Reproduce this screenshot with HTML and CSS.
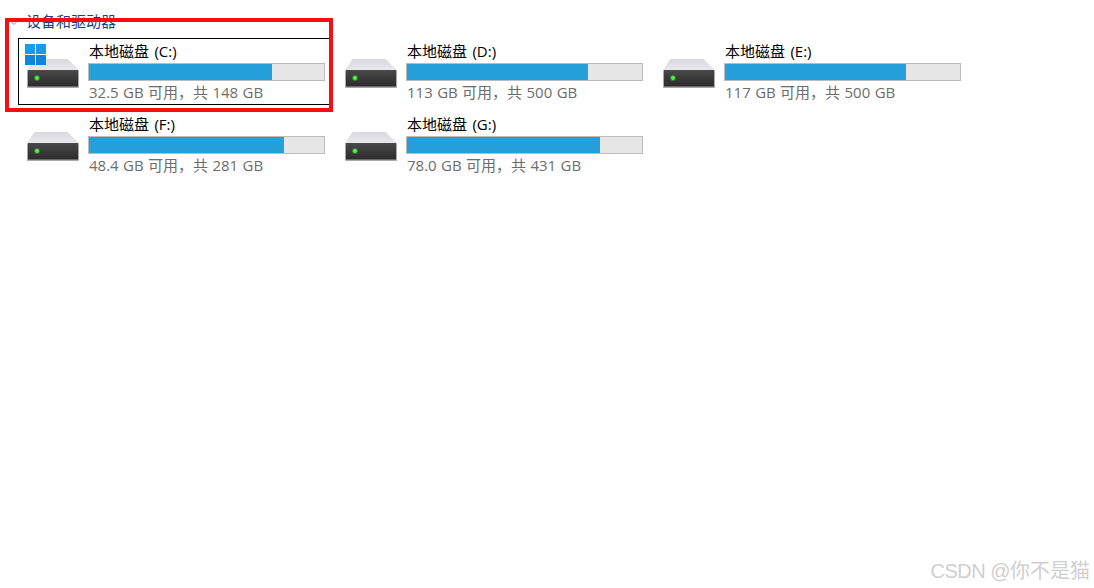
FILE: index.html
```html
<!DOCTYPE html>
<html lang="zh-CN">
<head>
    <meta charset="UTF-8">
    <title>设备和驱动器</title>
    <link rel="stylesheet" href="styles.css">
</head>
<body>
    <svg class="defs" width="0" height="0">
        <defs>
            <linearGradient id="driveFront" x1="0" y1="0" x2="0" y2="1">
                <stop offset="0" stop-color="#4a4a4a"/>
                <stop offset="0.5" stop-color="#3a3a3a"/>
                <stop offset="1" stop-color="#2c2c2c"/>
            </linearGradient>
            <linearGradient id="driveTop" x1="0" y1="0" x2="0" y2="1">
                <stop offset="0" stop-color="#d9d9de"/>
                <stop offset="1" stop-color="#e9e9ec"/>
            </linearGradient>
            <symbol id="drive" viewBox="0 0 56 46">
                <path d="M9.5 16h33L54 27H2z" fill="url(#driveTop)"/>
                <rect x="2" y="27" width="52" height="18" rx="1" fill="#a8a8a8"/>
                <rect x="3" y="27" width="50" height="16.5" fill="url(#driveFront)"/>
                <circle cx="12" cy="35" r="3" fill="#39e639" opacity="0.35"/>
                <circle cx="12" cy="35" r="1.9" fill="#4dff3a"/>
            </symbol>
        </defs>
    </svg>

    <h2 class="group-title">
        <svg class="chevron" width="8" height="6" viewBox="0 0 8 6"><path d="M1 1.5l3 3 3-3" fill="none" stroke="#8a8a8a" stroke-width="1"/></svg>
        设备和驱动器
    </h2>

    <div class="drives">
        <div class="drive selected">
            <div class="drive-icon">
                <svg class="drive-pic" width="56" height="46"><use href="#drive"/></svg>
                <svg class="win-logo" width="21" height="21" viewBox="0 0 21 21">
                    <rect width="10" height="10" fill="#1a9bea"/>
                    <rect x="11" width="10" height="10" fill="#1a9bea"/>
                    <rect y="11" width="10" height="10" fill="#0f86dc"/>
                    <rect x="11" y="11" width="10" height="10" fill="#0f86dc"/>
                </svg>
            </div>
            <div class="drive-info">
                <div class="drive-name">本地磁盘 (C:)</div>
                <div class="bar"><div class="bar-fill" style="width:78%"></div></div>
                <div class="drive-free">32.5 GB 可用，共 148 GB</div>
            </div>
        </div>
        <div class="drive">
            <div class="drive-icon"><svg class="drive-pic" width="56" height="46"><use href="#drive"/></svg></div>
            <div class="drive-info">
                <div class="drive-name">本地磁盘 (D:)</div>
                <div class="bar"><div class="bar-fill" style="width:77%"></div></div>
                <div class="drive-free">113 GB 可用，共 500 GB</div>
            </div>
        </div>
        <div class="drive">
            <div class="drive-icon"><svg class="drive-pic" width="56" height="46"><use href="#drive"/></svg></div>
            <div class="drive-info">
                <div class="drive-name">本地磁盘 (E:)</div>
                <div class="bar"><div class="bar-fill" style="width:77%"></div></div>
                <div class="drive-free">117 GB 可用，共 500 GB</div>
            </div>
        </div>
        <div class="drive">
            <div class="drive-icon"><svg class="drive-pic" width="56" height="46"><use href="#drive"/></svg></div>
            <div class="drive-info">
                <div class="drive-name">本地磁盘 (F:)</div>
                <div class="bar"><div class="bar-fill" style="width:82.8%"></div></div>
                <div class="drive-free">48.4 GB 可用，共 281 GB</div>
            </div>
        </div>
        <div class="drive">
            <div class="drive-icon"><svg class="drive-pic" width="56" height="46"><use href="#drive"/></svg></div>
            <div class="drive-info">
                <div class="drive-name">本地磁盘 (G:)</div>
                <div class="bar"><div class="bar-fill" style="width:82.2%"></div></div>
                <div class="drive-free">78.0 GB 可用，共 431 GB</div>
            </div>
        </div>
    </div>

    <!-- marker drawn over the first drive -->
    <div class="red-box"></div>
    <div class="watermark"><span class="watermark-latin">CSDN @</span>你不是猫</div>
</body>
</html>
```

FILE: styles.css
```css
html, body {
    height: 100%;
}
body {
    font-family: "Open Sans", "Noto Sans CJK SC", sans-serif;
    background-color: #fff;
    margin: 0;
    padding: 10px 0 0 0;
    box-sizing: border-box;
    color: #000;
    position: relative;
    overflow: hidden;
}
.defs {
    display: block;
    height: 0;
}
.group-title {
    display: flex;
    align-items: center;
    gap: 8px;
    height: 20px;
    margin: 0 0 8px 0;
    padding-left: 10px;
    font-size: 15px;
    font-weight: normal;
    color: #1b3f8f;
}
.chevron {
    margin-top: 6px;
}
.drives {
    display: grid;
    grid-template-columns: repeat(3, 312px);
    grid-auto-rows: 67px;
    gap: 6px;
    padding-left: 18px;
}
.drive {
    display: flex;
    gap: 7px;
    padding-left: 6px;
    border: 1px solid transparent;
}
.drive.selected {
    border-color: #000;
}
.drive-icon {
    position: relative;
    width: 56px;
    height: 46px;
    margin-top: 4px;
}
.drive-pic {
    display: block;
}
.win-logo {
    position: absolute;
    left: 0;
    top: 1px;
}
.drive-info {
    width: 237px;
    font-size: 15px;
}
.drive-name {
    height: 24px;
    line-height: 25px;
    padding-left: 1px;
    word-spacing: 1.5px;
    white-space: nowrap;
}
.bar {
    box-sizing: border-box;
    height: 18px;
    background-color: #e6e6e6;
    border: 1px solid #bcbcbc;
}
.bar-fill {
    height: 100%;
    background-color: #26a0da;
}
.drive-free {
    height: 22px;
    line-height: 22px;
    padding-left: 1px;
    word-spacing: 0.5px;
    color: #6d6d6d;
    white-space: nowrap;
}
.red-box {
    position: absolute;
    left: 5px;
    top: 18px;
    width: 320px;
    height: 86px;
    border: 4px solid #fb0d0d;
}
.watermark {
    position: absolute;
    right: 4px;
    bottom: 5px;
    font-family: "Liberation Sans", "Noto Sans CJK SC", sans-serif;
    font-size: 20px;
    line-height: 24px;
    color: #cfcfcf;
}
.watermark-latin {
    letter-spacing: -0.5px;
}
```
